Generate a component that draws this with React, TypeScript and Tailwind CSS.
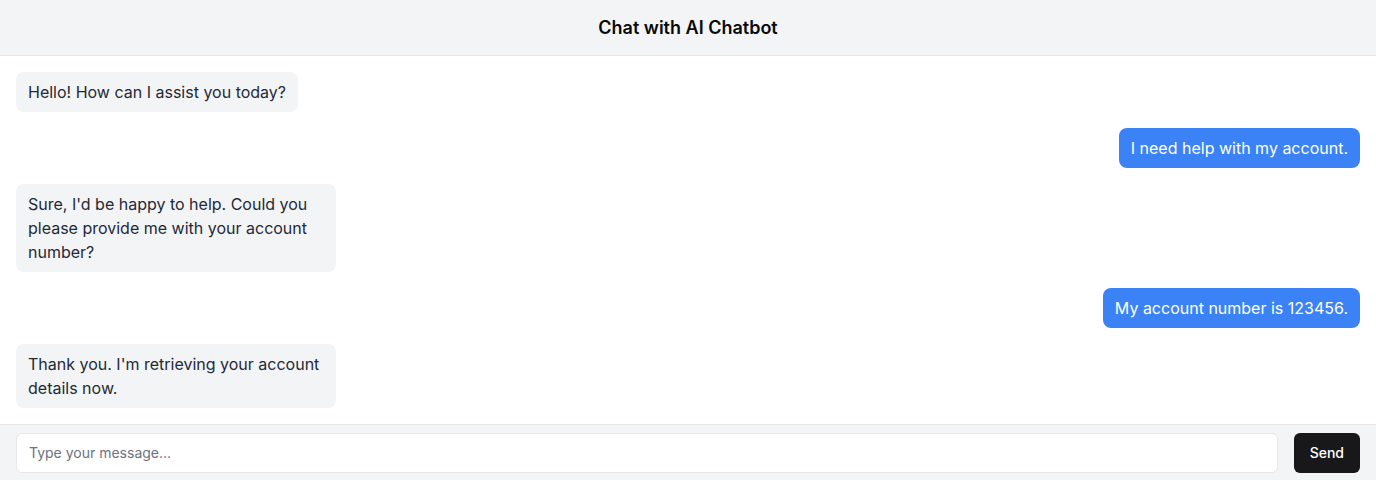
import React from "react";

const messages: { from: "bot" | "user"; text: string }[] = [
  { from: "bot", text: "Hello! How can I assist you today?" },
  { from: "user", text: "I need help with my account." },
  { from: "bot", text: "Sure, I'd be happy to help. Could you please provide me with your account number?" },
  { from: "user", text: "My account number is 123456." },
  { from: "bot", text: "Thank you. I'm retrieving your account details now." },
];

export default function App() {
  return (
    <div className="flex h-[480px] flex-col bg-white" style={{ fontFamily: "Inter, 'Noto Sans', sans-serif" }}>
      <header className="flex h-14 shrink-0 items-center justify-center border-b border-[#e5e7eb] bg-[#f3f4f6]">
        <h1 className="text-lg font-semibold text-[#09090b]">Chat with AI Chatbot</h1>
      </header>
      <main className="flex flex-1 flex-col gap-4 overflow-hidden p-4">
        {messages.map((m, i) =>
          m.from === "bot" ? (
            <div key={i} className="flex justify-start">
              <div className="max-w-xs rounded-lg bg-[#f3f4f6] px-3 py-2 text-base leading-6 text-[#1f2937]">{m.text}</div>
            </div>
          ) : (
            <div key={i} className="flex justify-end">
              <div className="max-w-xs rounded-lg bg-[#3b82f6] px-3 py-2 text-base leading-6 text-white">{m.text}</div>
            </div>
          )
        )}
      </main>
      <footer className="flex h-14 shrink-0 items-center gap-4 border-t border-[#e5e7eb] bg-[#f3f4f6] px-4">
        <input
          className="h-10 flex-1 rounded-md border border-[#e5e7eb] bg-white px-3 text-sm text-[#111827] placeholder:text-[#6b7280] outline-none"
          placeholder="Type your message..."
        />
        <button className="h-10 rounded-md bg-[#18181b] px-4 text-sm font-medium text-white">Send</button>
      </footer>
    </div>
  );
}
